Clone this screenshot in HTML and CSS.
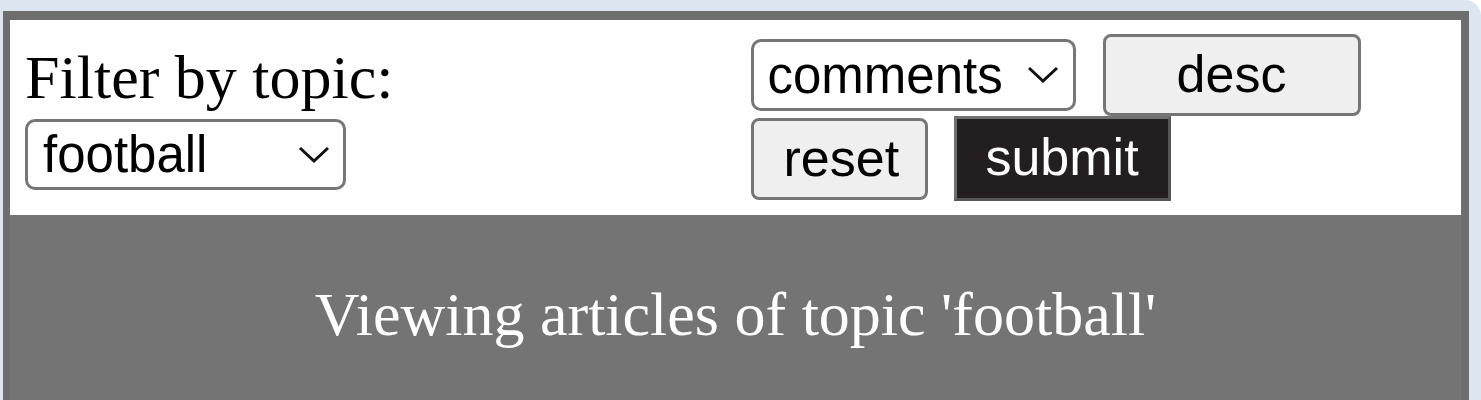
FILE: index.html
```html
<!DOCTYPE html>
<html lang="en">
<head>
<meta charset="utf-8">
<title>Articles</title>
<link rel="stylesheet" href="styles.css">
</head>
<body>
<div class="card">
  <div class="frame">
    <form class="controls">
      <div class="filter">
        <label class="filter-label" for="topic">Filter by topic:</label>
        <span class="select-wrap topic-wrap">
          <select id="topic" class="select topic-select"><option>football</option></select>
          <svg class="chev" viewBox="0 0 32 17" width="32" height="17" aria-hidden="true"><path d="M2 2 L16 15 L30 2" fill="none" stroke="#111" stroke-width="3"/></svg>
        </span>
      </div>
      <div class="sort">
        <span class="select-wrap sort-wrap">
          <select class="select sort-select"><option>comments</option></select>
          <svg class="chev" viewBox="0 0 32 17" width="32" height="17" aria-hidden="true"><path d="M2 2 L16 15 L30 2" fill="none" stroke="#111" stroke-width="3"/></svg>
        </span>
        <button type="button" class="btn btn-desc">desc</button>
        <button type="reset" class="btn btn-reset">reset</button>
        <button type="submit" class="btn-submit">submit</button>
      </div>
    </form>
    <section class="banner">
      <p class="banner-text">Viewing articles of topic 'football'</p>
    </section>
  </div>
</div>
</body>
</html>
```

FILE: styles.css
```css
html, body {
  margin: 0;
  padding: 0;
  background: #ffffff;
}

body {
  width: 1481px;
  height: 400px;
  overflow: hidden;
}

.card {
  background: #dde5f0;
  border-top-right-radius: 16px;
  padding: 11px 12px 0 3px;
  height: 400px;
  box-sizing: border-box;
}

.frame {
  border-style: solid;
  border-color: #6e6e6e;
  border-width: 9px 8px 0 7px;
  background: #747474;
  height: 100%;
  box-sizing: border-box;
}

.controls {
  display: grid;
  grid-template-columns: 1fr 1fr;
  height: 195px;
  box-sizing: border-box;
  background: #ffffff;
  margin: 0;
}

.filter {
  padding: 23px 15px 0 15px;
  display: flex;
  flex-direction: column;
  align-items: flex-start;
}

.filter-label {
  font-family: "Liberation Serif", "Times New Roman", serif;
  font-size: 62px;
  line-height: 69px;
  color: #000;
}

.select-wrap {
  position: relative;
  display: inline-block;
}

.topic-wrap {
  margin-top: 7px;
}

.select {
  appearance: none;
  -webkit-appearance: none;
  font-family: "Liberation Sans", Arial, sans-serif;
  font-size: 51px;
  color: #000;
  background: #ffffff;
  border: 3px solid #767676;
  border-radius: 10px;
  box-sizing: border-box;
  margin: 0;
  display: block;
}

.topic-select {
  width: 321px;
  height: 71px;
  padding: 0 0 0 15px;
}

.sort-select {
  width: 325px;
  height: 72px;
  padding: 0 0 0 14px;
}

.chev {
  position: absolute;
  right: 16px;
  top: 50%;
  margin-top: -9px;
  pointer-events: none;
}

.sort-wrap .chev {
  right: 17px;
}

.sort {
  padding: 14px 15px 0 15px;
  display: flex;
  flex-wrap: wrap;
  align-items: center;
  align-content: flex-start;
  column-gap: 26px;
  row-gap: 0;
}

.sort-wrap {
  margin-right: 1px;
}

.btn {
  font-family: "Liberation Sans", Arial, sans-serif;
  font-size: 52px;
  color: #000;
  background: #efefef;
  border: 3px solid #767676;
  border-radius: 8px;
  height: 82px;
  box-sizing: border-box;
  margin: 0;
  padding: 0 30px 2px;
}

.btn-desc {
  width: 258px;
}

.btn-reset {
  width: 177px;
}

.btn-submit {
  font-family: "Liberation Sans", Arial, sans-serif;
  font-size: 52px;
  color: #ffffff;
  background: #231f20;
  border: 3px solid;
  border-color: #707070 #555555 #555555 #707070;
  border-radius: 0;
  height: 85px;
  width: 217px;
  box-sizing: border-box;
  margin: 0;
  padding: 0 0 4px;
}

.banner {
  padding-top: 65px;
  text-align: center;
}

.banner-text {
  margin: 0;
  font-family: "Liberation Serif", "Times New Roman", serif;
  font-size: 62px;
  line-height: 69px;
  color: #ffffff;
}
```
